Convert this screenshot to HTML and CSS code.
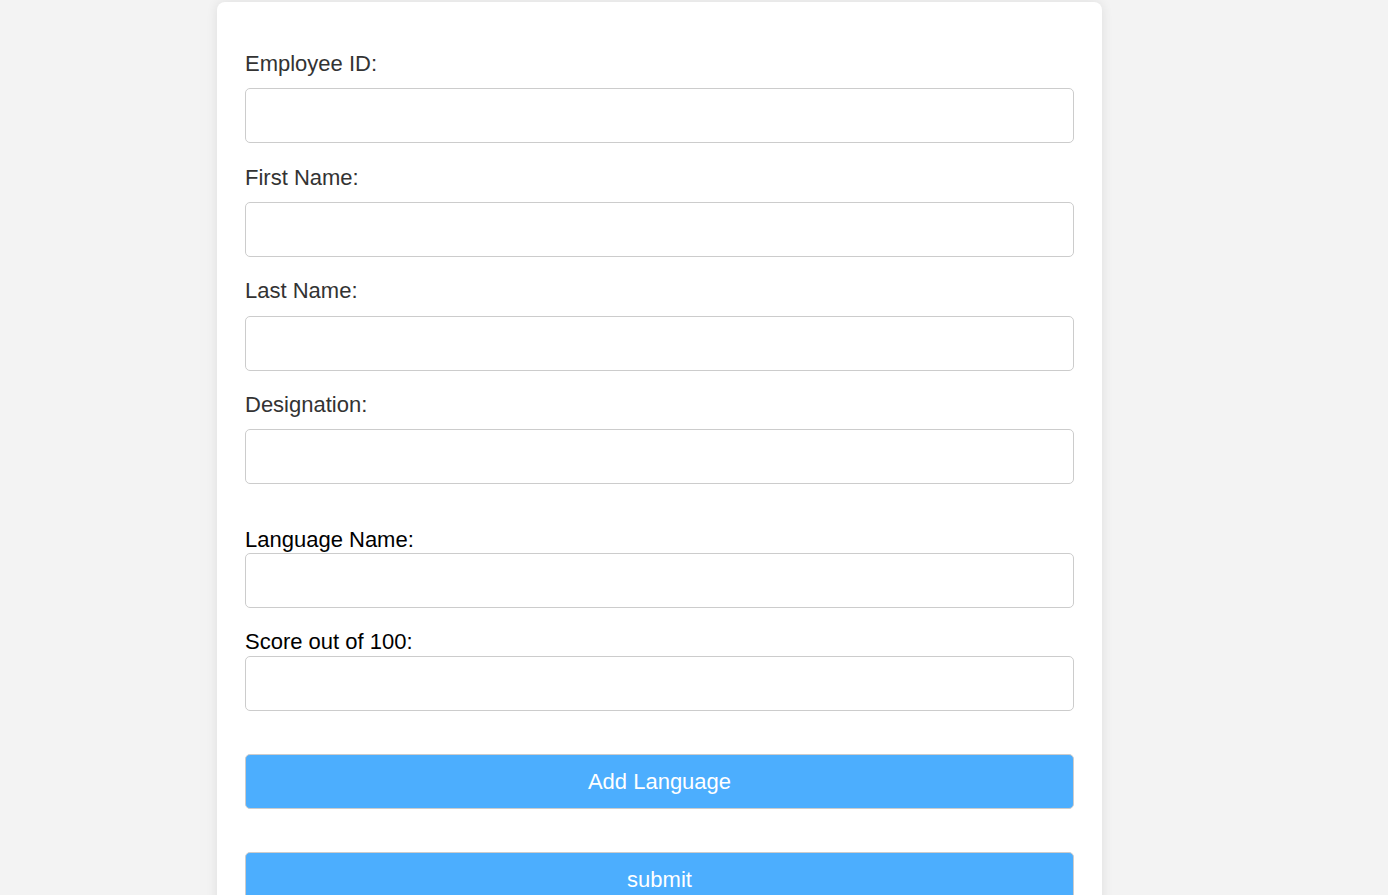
FILE: index.html
```html
<!DOCTYPE html>
<html lang="en">
<head>
<meta charset="utf-8">
<title>Employee Form</title>
<link rel="stylesheet" href="styles.css">
</head>
<body>
<div class="card">
  <form class="form">
    <div class="field">
      <label class="label" for="eid">Employee ID:</label>
      <input class="input" id="eid" type="text">
    </div>
    <div class="field">
      <label class="label" for="fname">First Name:</label>
      <input class="input" id="fname" type="text">
    </div>
    <div class="field">
      <label class="label" for="lname">Last Name:</label>
      <input class="input" id="lname" type="text">
    </div>
    <div class="field">
      <label class="label" for="desig">Designation:</label>
      <input class="input" id="desig" type="text">
    </div>
    <div class="languages">
      <div class="lang-field">
        <label class="lang-label" for="lang">Language Name:</label>
        <input class="input" id="lang" type="text">
      </div>
      <div class="lang-field">
        <label class="lang-label" for="score">Score out of 100:</label>
        <input class="input" id="score" type="text">
      </div>
    </div>
    <button type="button" class="btn btn-add">Add Language</button>
    <button type="submit" class="btn btn-submit">submit</button>
  </form>
</div>
</body>
</html>
```
FILE: styles.css
```css
html, body {
  margin: 0;
  padding: 0;
}
body {
  background: #f3f3f3;
  font-family: "Liberation Sans", Arial, sans-serif;
  height: 895px;
  overflow: hidden;
}
.card {
  box-sizing: border-box;
  width: 885px;
  margin: 2px 0 0 217px;
  padding: 50px 28px 40px;
  background: #ffffff;
  border-radius: 8px;
  box-shadow: 0 0 12px rgba(0, 0, 0, 0.09);
}
.form {
  display: flex;
  flex-direction: column;
}
.field {
  display: flex;
  flex-direction: column;
}
.label {
  display: block;
  font-size: 22px;
  line-height: 25.3px;
  color: #333333;
  margin: -1px 0 12px;
}
.input {
  display: block;
  box-sizing: border-box;
  width: 100%;
  height: 55px;
  margin: 0 0 22.4px;
  padding: 0 11px;
  border: 1px solid #cccccc;
  border-radius: 5px;
  background: #ffffff;
  font-size: 22px;
  font-family: inherit;
}
.languages {
  margin-top: 21px;
  display: flex;
  flex-direction: column;
}
.lang-field {
  display: flex;
  flex-direction: column;
}
.lang-label {
  display: block;
  font-size: 22px;
  line-height: 25.3px;
  color: #000000;
  margin: -1px 0 1px;
}
.btn {
  display: block;
  box-sizing: border-box;
  width: 100%;
  height: 55px;
  border: 1px solid #cccccc;
  border-radius: 5px;
  background: #4caefe;
  color: #ffffff;
  font-family: inherit;
  font-size: 22px;
  padding: 0;
  cursor: pointer;
}
.btn-add {
  margin-top: 21px;
}
.btn-submit {
  margin-top: 43px;
}
```
